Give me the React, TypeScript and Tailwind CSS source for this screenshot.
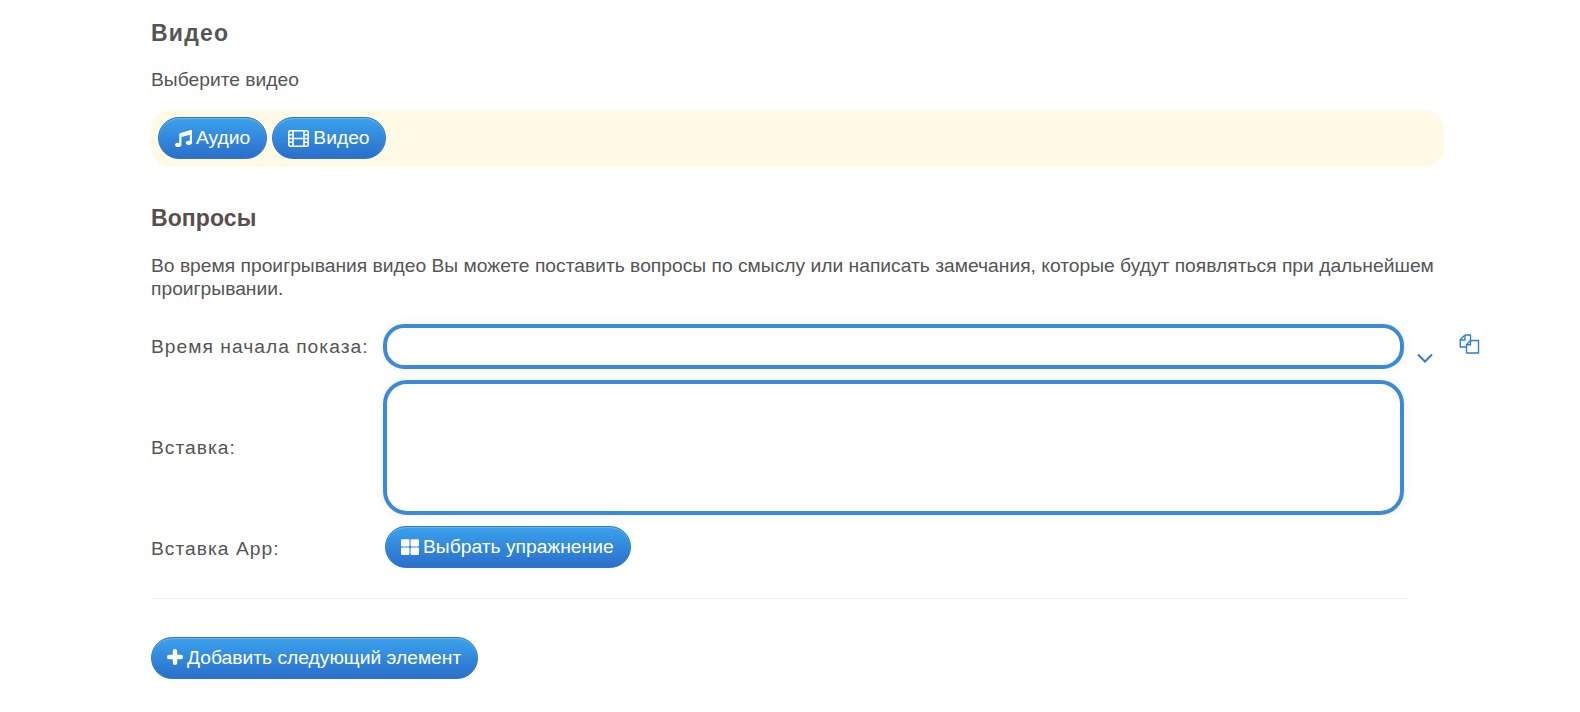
import React from "react";
import { FaMusic, FaThLarge } from "react-icons/fa";

const btn =
  "flex items-center gap-[4px] h-[42px] rounded-[21px] border border-[#2a78c8] bg-gradient-to-b from-[#3ba2ec] to-[#2b6fcb] text-white text-[19.26px] leading-none shadow-[inset_0_1px_1px_rgba(255,255,255,0.25)]";

function CopyIcon() {
  return (
    <svg width="21" height="20" viewBox="0 0 21 20" fill="none" stroke="#2f7fd0" strokeWidth="1.4" strokeLinejoin="round">
      <path d="M6 1h5.5v5M6 1L1.2 5.8V13H7" />
      <path d="M1.4 6H6V1.4" />
      <path d="M11.5 6.5h8V19H7.5V10.5z" fill="#fff" />
      <path d="M7.6 10.8H11.5V6.8" />
    </svg>
  );
}

function Chevron() {
  return (
    <svg width="16" height="10" viewBox="0 0 16 10" fill="none" stroke="#2f7fd0" strokeWidth="2">
      <path d="M1 1.5l7 7 7-7" />
    </svg>
  );
}

function FilmIcon() {
  return (
    <svg width="21" height="17" viewBox="0 0 21 17" fill="none" stroke="#fff" strokeWidth="1.6">
      <rect x="0.8" y="0.8" width="19.4" height="15.4" rx="1.5" />
      <path d="M5 1v15M16 1v15M1 4.8h4M1 8.5h4M1 12.2h4M16 4.8h4M16 8.5h4M16 12.2h4M5 8.5h11" />
    </svg>
  );
}

function PlusIcon() {
  return (
    <svg width="16" height="16" viewBox="0 0 16 16" fill="none" stroke="#fff" strokeWidth="4.4" strokeLinecap="round" className="-mt-[2px]">
      <path d="M8 2.2v11.6M2.2 8h11.6" />
    </svg>
  );
}

export default function App() {
  return (
    <div className="w-[1580px] h-[712px] overflow-hidden bg-white pl-[151px] text-[#555] text-[19.26px] font-['Liberation_Sans',Arial,sans-serif]">
      <h2 className="pt-[20px] text-[23px] leading-[26px] font-bold tracking-[1.2px]">Видео</h2>
      <p className="mt-[22px] leading-[23px]">Выберите видео</p>
      <div className="mt-[19px] w-[1293px] h-[57px] rounded-[20px] bg-[#fff9e6] flex items-start gap-[5px] pl-[7px] pt-[7px]">
        <button className={`${btn} px-[16px]`}>
          <FaMusic className="w-[17px] h-[17px]" />
          <span>Аудио</span>
        </button>
        <button className={`${btn} pl-[15px] pr-[15px]`}>
          <FilmIcon />
          <span>Видео</span>
        </button>
      </div>
      <h2 className="mt-[38px] text-[23px] leading-[26px] font-bold tracking-[0.1px] text-[#5a4d4d]">Вопросы</h2>
      <p className="mt-[23px] w-[1300px] leading-[23px]">
        Во время проигрывания видео Вы можете поставить вопросы по смыслу или написать замечания, которые будут появляться при дальнейшем проигрывании.
      </p>
      <div className="mt-[24px] flex items-start tracking-[1px]">
        <label className="w-[232px] pt-[11px] leading-[23px]">Время начала показа:</label>
        <div className="w-[1021px] h-[45px] rounded-[21px] border-4 border-[#3a8ad9] shadow-[0_0_10px_rgba(0,0,0,0.08)]" />
        <div className="ml-[13px] pt-[29px]"><Chevron /></div>
        <div className="ml-[26px] pt-[10px]"><CopyIcon /></div>
      </div>
      <div className="mt-[11px] flex items-center tracking-[1px]">
        <label className="w-[232px] leading-[23px]">Вставка:</label>
        <div className="w-[1021px] h-[135px] rounded-[24px] border-4 border-[#3a8ad9] shadow-[0_0_10px_rgba(0,0,0,0.08)]" />
      </div>
      <div className="mt-[11px] flex items-center">
        <label className="w-[234px] tracking-[1px] leading-[23px] pt-[2px]">Вставка App:</label>
        <button className={`${btn} pl-[15px] pr-[16px]`}>
          <FaThLarge className="w-[18px] h-[18px]" />
          <span>Выбрать упражнение</span>
        </button>
      </div>
      <div className="mt-[30px] w-[1258px] h-px bg-[#eeeeee]" />
      <button className={`${btn} mt-[38px] pl-[15px] pr-[16px]`}>
        <PlusIcon />
        <span>Добавить следующий элемент</span>
      </button>
    </div>
  );
}
